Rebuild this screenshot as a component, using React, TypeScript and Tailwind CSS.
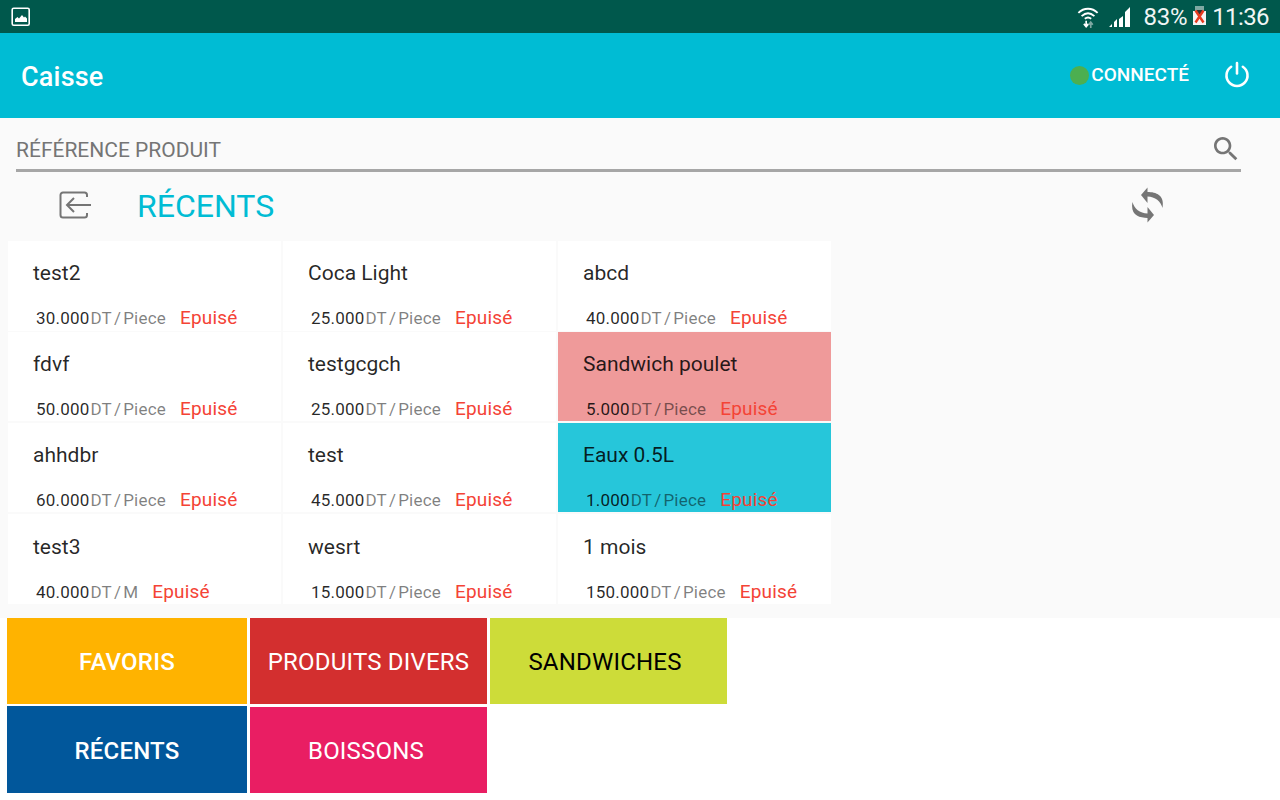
interface Product {
  name: string;
  price: string;
  unit?: string;
  bg?: string;
}

const products: Product[] = [
  { name: "test2", price: "30.000" },
  { name: "Coca Light", price: "25.000" },
  { name: "abcd", price: "40.000" },
  { name: "fdvf", price: "50.000" },
  { name: "testgcgch", price: "25.000" },
  { name: "Sandwich poulet", price: "5.000", bg: "bg-[#ef9a9a]" },
  { name: "ahhdbr", price: "60.000" },
  { name: "test", price: "45.000" },
  { name: "Eaux 0.5L", price: "1.000", bg: "bg-[#26c6da]" },
  { name: "test3", price: "40.000", unit: "M" },
  { name: "wesrt", price: "15.000" },
  { name: "1 mois", price: "150.000" },
];

// card heights differ by a pixel per row in the screenshot
const rowStyles = [
  { height: "h-[90px]", name: "pt-[18px] h-[60px]" },
  { height: "h-[89px]", name: "pt-[18px] h-[60px]" },
  { height: "h-[89px]", name: "pt-[18px] h-[60px]" },
  { height: "h-[90px]", name: "pt-[19px] h-[61px]" },
];

function StatusBar() {
  return (
    <div className="h-[33px] bg-[#00584c] flex items-center justify-between px-[11px] text-white">
      <svg width="20" height="20" viewBox="0 0 20 20" fill="none">
        <rect x="1.2" y="1.2" width="17" height="17" rx="1.5" stroke="white" strokeWidth="1.6" />
        <path d="M4 15v-3l2.500-2 1.500 1.500L11 8l2 2.500 1-1 2 2V15z" fill="white" />
      </svg>
      <div className="flex items-center font-['Roboto',sans-serif] text-[24px] leading-none text-[#f0f5f4]">
        <svg width="22" height="26" viewBox="0 0 24 26" fill="none" className="mr-[10px]">
          <path d="M1.500 8.500C7.500 2.500 16.500 2.500 22.500 8.500" stroke="white" strokeWidth="2" />
          <path d="M5 12c4.500-4 9.500-4 14 0" stroke="white" strokeWidth="2" />
          <path d="M8.500 15c2.500-2 4.500-2 7 0" stroke="white" strokeWidth="2" />
          <path d="M10 17v6M7.500 20.500l2.500 3 2.500-3" stroke="white" strokeWidth="1.800" />
          <path d="M15 25v-6M12.800 21.500l2.200-3 2.200 3" stroke="#7fa9a3" strokeWidth="1.800" />
        </svg>
        <svg width="22" height="22" viewBox="0 0 22 22" className="mr-[13px]">
          <path d="M0 21h3v-3zM5 21h3v-8l-3 3zM10 21h4V10l-4 3zM16 21h5V1l-5 5z" fill="white" />
        </svg>
        <span className="mr-[6px] tracking-[-0.3px]">83%</span>
        <svg width="13" height="19" viewBox="0 0 13 19" className="mr-[6px] -mt-[3px]">
          <rect x="2" y="0" width="9" height="6" fill="#7fa9a3" />
          <rect x="0" y="5" width="13" height="14" fill="#f4f4f4" />
          <path d="M4 4h5v4H4z" fill="#333" />
          <path d="M2.500 4.500l8 12M10.500 4.500l-8 12" stroke="#e53a1e" strokeWidth="2.400" />
        </svg>
        <span className="tracking-[-0.6px]">11:36</span>
      </div>
    </div>
  );
}

function AppBar() {
  return (
    <header className="h-[85px] bg-[#00bcd4] flex items-center pl-[21px] pr-[29px] text-white">
      <h1 className="text-[27px] tracking-[0.2px] font-medium flex-1 mt-[4px]">Caisse</h1>
      <span className="w-[19px] h-[19px] rounded-full bg-[#4caf50] mr-[2px]" />
      <span className="text-[19px] font-medium mr-[34px]">CONNECTÉ</span>
      <svg width="28" height="28" viewBox="0 0 24 24" fill="none" stroke="white" strokeWidth="2.200" strokeLinecap="round" className="-mt-[3px]">
        <path d="M12 2.500v9" />
        <path d="M7 5.800a9 9 0 1 0 10 0" />
      </svg>
    </header>
  );
}

function ProductCard({ product, row }: { product: Product; row: number }) {
  const style = rowStyles[row];
  return (
    <div className={`${style.height} pl-[25px] overflow-hidden ${product.bg ?? "bg-white"}`}>
      <div className={`${style.name} text-[21px] leading-[28px] text-black/85`}>{product.name}</div>
      <div className="flex items-baseline pl-[3px] pt-[5px] text-[17px] leading-[24px] tracking-[0.2px]">
        <span className="text-black/85">{product.price}</span>
        <span className="text-black/50 ml-[1px]">DT</span>
        <span className="text-black/50 ml-[2px]">/</span>
        <span className="text-black/50 ml-[2px]">{product.unit ?? "Piece"}</span>
        <span className="text-[#f44336] text-[19px] ml-[14px]">Epuisé</span>
      </div>
    </div>
  );
}

function CategoryButton({
  label,
  bg,
  text = "text-white",
  extra = "",
}: {
  label: string;
  bg: string;
  text?: string;
  extra?: string;
}) {
  return (
    <div className={`flex items-center justify-center text-[24px] tracking-[0.2px] pt-[2px] ${bg} ${text} ${extra}`}>
      {label}
    </div>
  );
}

export default function App() {
  return (
    <div className="w-[1280px] h-[800px] overflow-hidden bg-white font-['Roboto',sans-serif]">
      <StatusBar />
      <AppBar />
      <main className="h-[500px] bg-[#fafafa] pt-[13px]">
        <div className="ml-[16px] w-[1225px] h-[41px] border-b-[3px] border-[#a6a6a6] flex items-center justify-between">
          <span className="text-[21px] text-[#757575] mt-[2px]">RÉFÉRENCE PRODUIT</span>
          <svg width="32" height="32" viewBox="0 0 24 24" fill="#757575" className="-mt-[2px] -mr-[1px]">
            <path d="M15.500 14h-.79l-.28-.27C15.410 12.590 16 11.110 16 9.500 16 5.910 13.090 3 9.500 3S3 5.910 3 9.500 5.910 16 9.500 16c1.610 0 3.090-.59 4.230-1.570l.27.28v.79l5 4.990L20.490 19l-4.990-5zm-6 0C7.010 14 5 11.990 5 9.500S7.010 5 9.500 5 14 7.010 14 9.500 11.990 14 9.500 14z" />
          </svg>
        </div>
        <div className="h-[69px] flex items-center pl-[59px] pr-[113px]">
          <svg width="33" height="28" viewBox="0 0 33 28" fill="none" stroke="#757575" strokeWidth="2" className="-mt-[3px]">
            <path d="M28 6V4a2.500 2.500 0 0 0-2.500-2.500H4A2.500 2.500 0 0 0 1.500 4v20A2.500 2.500 0 0 0 4 26.500h21.500A2.500 2.500 0 0 0 28 24v-2" />
            <path d="M32 14H8M15 7l-7 7 7 7" />
          </svg>
          <h2 className="ml-[45px] flex-1 text-[32px] text-[#00bcd4] -mt-[2px]">RÉCENTS</h2>
          <svg width="36" height="36" viewBox="0 0 36 36" fill="#757575" className="-mt-[3px]">
            <path d="M10 8 16.500 .5v4.500c8.500 0 17.500 3 15 16C30 14.500 24 9.500 16.500 9.500V16z" />
            <path transform="rotate(180 16.500 18)" d="M10 8 16.500 .5v4.500c8.500 0 17.500 3 15 16C30 14.500 24 9.500 16.500 9.500V16z" />
          </svg>
        </div>
        <div className="ml-[8px] w-[823px] grid grid-cols-3 gap-x-[2px] grid-rows-[91px_91px_91px_90px]">
          {products.map((product, i) => (
            <ProductCard key={product.name} product={product} row={Math.floor(i / 3)} />
          ))}
        </div>
      </main>
      <div className="ml-[7px] w-[720px] grid grid-cols-[240px_237px_237px] grid-rows-[86px_86px] gap-[3px]">
        <CategoryButton label="FAVORIS" bg="bg-[#ffb300]" extra="font-medium" />
        <CategoryButton label="PRODUITS DIVERS" bg="bg-[#d32f2f]" />
        <CategoryButton label="SANDWICHES" bg="bg-[#cddc39]" text="text-black" extra="pr-[7px]" />
        <CategoryButton label="RÉCENTS" bg="bg-[#01579b]" extra="font-medium -mt-[1px]" />
        <CategoryButton label="BOISSONS" bg="bg-[#e91e63]" extra="pr-[5px]" />
      </div>
    </div>
  );
}
